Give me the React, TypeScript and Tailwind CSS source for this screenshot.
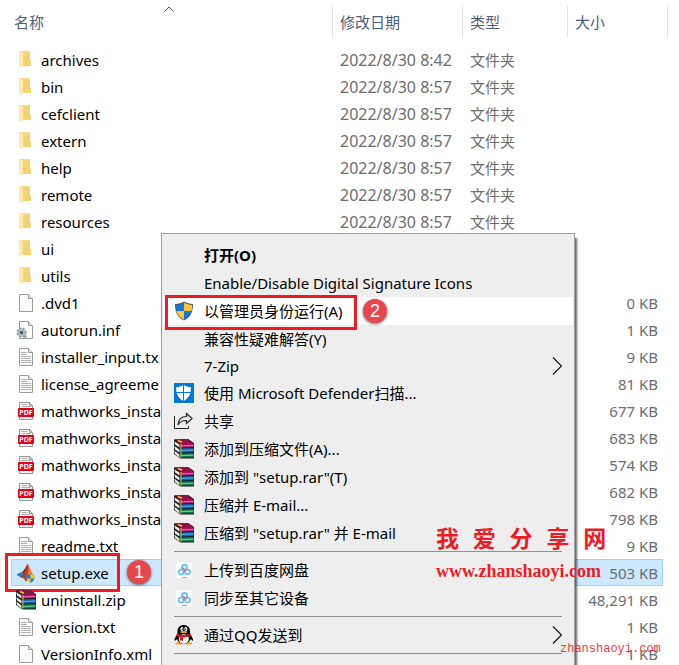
import { ReactNode } from "react";
import clsx from "clsx";

type IconName = "folder" | "file" | "text" | "inf" | "pdf" | "matlab" | "rar";

interface FileEntry {
  name: string;
  icon: IconName;
  date?: string;
  type?: string;
  size?: string;
}

const FILES: FileEntry[] = [
  { name: "archives", icon: "folder", date: "2022/8/30 8:42", type: "文件夹" },
  { name: "bin", icon: "folder", date: "2022/8/30 8:57", type: "文件夹" },
  { name: "cefclient", icon: "folder", date: "2022/8/30 8:57", type: "文件夹" },
  { name: "extern", icon: "folder", date: "2022/8/30 8:57", type: "文件夹" },
  { name: "help", icon: "folder", date: "2022/8/30 8:57", type: "文件夹" },
  { name: "remote", icon: "folder", date: "2022/8/30 8:57", type: "文件夹" },
  { name: "resources", icon: "folder", date: "2022/8/30 8:57", type: "文件夹" },
  { name: "ui", icon: "folder" },
  { name: "utils", icon: "folder" },
  { name: ".dvd1", icon: "file", size: "0 KB" },
  { name: "autorun.inf", icon: "inf", size: "1 KB" },
  { name: "installer_input.tx", icon: "text", size: "9 KB" },
  { name: "license_agreeme", icon: "text", size: "81 KB" },
  { name: "mathworks_insta", icon: "pdf", size: "677 KB" },
  { name: "mathworks_insta", icon: "pdf", size: "683 KB" },
  { name: "mathworks_insta", icon: "pdf", size: "574 KB" },
  { name: "mathworks_insta", icon: "pdf", size: "682 KB" },
  { name: "mathworks_insta", icon: "pdf", size: "798 KB" },
  { name: "readme.txt", icon: "text", size: "9 KB" },
  { name: "setup.exe", icon: "matlab", size: "503 KB" },
  { name: "uninstall.zip", icon: "rar", size: "48,291 KB" },
  { name: "version.txt", icon: "text", size: "1 KB" },
  { name: "VersionInfo.xml", icon: "file", size: "1 KB" },
];

function Page({ lines }: { lines?: boolean }) {
  return (
    <>
      <path d="M3.5 1.5h9l4 4v13h-13z" fill="#fafafa" stroke="#9c9c9c" />
      <path d="M12.5 1.5v4h4" fill="#e6e6e6" stroke="#9c9c9c" />
      {lines && (
        <path d="M5 5.5h6M5 7.5h6M5 9.5h10M5 11.5h10M5 13.5h10M5 15.5h10" stroke="#b0b0b0" />
      )}
    </>
  );
}

function RarIcon() {
  return (
    <svg viewBox="0 0 20 20" className="size-5 flex-none" aria-hidden="true">
      <path d="M0 .5 14 0l6 4v15.500H6.500L0 15z" fill="#1b1b22" />
      {/* pages on the left side */}
      <path d="M.3 2.300 5.500 5.500v3L1 5.500zM.3 7 5.500 10.500v3L1 10.500zM.3 11.500 5.500 15.500v3L1 15z" fill="#e4e6e8" />
      <path d="M0 .5 14 0l5.500 3.800L6 4.500z" fill="#8e1247" />
      <path d="M6 4.500 19.500 4v4L6 8.500z" fill="#a8165f" />
      <path d="M7 7 19.500 6.500" stroke="#e67ab8" strokeWidth="1.200" />
      <path d="M6 9.500 19.500 9v4L6 13.500z" fill="#1560a8" />
      <path d="M7 11.500 19.500 11" stroke="#52b0ee" strokeWidth="1.200" />
      <path d="M6 14.500 19.500 14v4.500H6z" fill="#127444" />
      <path d="M7 16.700 19.500 16.200" stroke="#62cf95" strokeWidth="1.200" />
      <path d="M7 5v13.500" stroke="#d8c021" />
      <path d="m4 1.500 4 1.700" stroke="#e4d02a" strokeWidth="1.500" />
    </svg>
  );
}

function FileIcon({ name }: { name: IconName }) {
  if (name === "rar") return <RarIcon />;
  return (
    <svg viewBox="0 0 20 20" className="size-5 flex-none" aria-hidden="true">
      {name === "folder" && (
        <>
          <path d="M3 1h11v9.500l1 .5v5H5z" fill="#f5d272" />
          <path d="M3 1h11v1.500H5z" fill="#f9dc8b" />
          <path d="M3 1l4 2v13l-1.500 2L3 16.500z" fill="#fdeaae" />
        </>
      )}
      {name === "file" && <Page />}
      {name === "text" && <Page lines />}
      {name === "inf" && (
        <>
          <Page />
          <circle cx="5.500" cy="12.500" r="4.300" fill="#b4bec6" stroke="#8f9aa3" strokeWidth="1.500" strokeDasharray="2 1.500" />
          <circle cx="5.500" cy="12.500" r="1.700" fill="#4d5a66" />
          <circle cx="9" cy="16.500" r="1.700" fill="#9eaab4" />
        </>
      )}
      {name === "pdf" && (
        <>
          <path d="M3.500 1.500h10l3 3v14h-13z" fill="#f4f4f4" stroke="#949494" />
          <path d="M13.500 1.500v3h3" fill="none" stroke="#949494" />
          <path d="M5.500 3.500h6M5.500 5.500h9" stroke="#b0b0b0" />
          <rect x="2" y="7" width="16" height="9" rx="1" fill="#e2001a" />
          <text x="10" y="14" fill="#fff" fontSize="7" fontWeight="700" textAnchor="middle" fontFamily="Open Sans, sans-serif">
            PDF
          </text>
        </>
      )}
      {name === "matlab" && (
        <>
          <path d="M.5 11.500 6 9l2.500 3-3 3z" fill="#2a78b8" />
          <path d="M6 9c2.500-1 3.500-6 6-8L8.500 12z" fill="#46304e" />
          <path d="M12 1c-2.500 2-2.500 8-6.500 14 2-.5 3 .5 4 3.500 3-1 3-5 5.500-6z" fill="#c23b1b" />
          <path d="M12 1c2 3 4 10 7 14l-4.500-3.500C13 12 12.500 15 11 17c1-5 2-11 1-16z" fill="#f08424" />
          <path d="M10 12.500 14.500 11l4.500 1.500c0 3.500-1.500 6-4.500 7.500-3-1.500-4.500-4-4.500-7.500z" fill="#2f7fce" />
          <path d="M14.500 11l4.500 1.500c0 1 0 2-.5 3h-4zM14.500 15.500V20c-2-1-3.500-2.500-4-4.500z" fill="#f8c52d" />
        </>
      )}
    </svg>
  );
}

function UacShield() {
  return (
    <svg viewBox="0 0 20 20" className="size-5" aria-hidden="true">
      <path d="M10 .5c2.500 1.500 5.500 2.300 9 2.500 0 8-2.500 13.500-9 16.500C3.500 16.500 1 11 1 3c3.500-.2 6.500-1 9-2.500z" fill="#50565c" />
      <path d="M10 1.700V10H2.400C2 8 1.900 6 2 4c3-.3 5.700-1 8-2.300z" fill="#1976d2" />
      <path d="M10 1.700V10h7.600c.4-2 .5-4 .4-6-3-.3-5.700-1-8-2.300z" fill="#fcc638" />
      <path d="M10 18.400V10H2.400c1 3.800 3.500 6.700 7.600 8.400z" fill="#fcc638" />
      <path d="M10 18.400V10h7.600c-1 3.800-3.500 6.700-7.600 8.400z" fill="#1976d2" />
    </svg>
  );
}

function DefenderIcon() {
  return (
    <svg viewBox="0 0 20 20" className="size-5" aria-hidden="true">
      <path d="M0 0h20v20H0z" fill="#0078d7" />
      <path d="M9.500 2c2 1.300 4.500 2 7.500 2.200 0 7-2.500 11-7.500 14C4.500 15.200 2 11.200 2 4.200 5 4 7.500 3.300 9.500 2z" fill="#fff" />
      <path d="M9.500 2v16.500M2 9.500h16" stroke="#0078d7" />
    </svg>
  );
}

function ShareIcon() {
  return (
    <svg viewBox="0 0 20 20" className="size-5" fill="none" stroke="#222" aria-hidden="true">
      <path d="M.5 5v12.500h14V15" />
      <path d="M12.500 2.500 18 7.500l-5.500 5v-3C8.500 9.500 6 10.500 4 14c.3-5.500 3.500-8.500 8.500-8.500z" strokeWidth="1.200" />
    </svg>
  );
}

function BaiduIcon() {
  return (
    <svg viewBox="0 0 20 20" className="size-5" fill="none" aria-hidden="true">
      <rect x="2" y="2" width="16" height="16" rx="3" fill="#fdfdfd" />
      <circle cx="10.500" cy="7.500" r="2.600" stroke="#55c3f8" strokeWidth="1.600" />
      <circle cx="7.200" cy="12" r="2.500" stroke="#55c3f8" strokeWidth="1.600" />
      <circle cx="13.500" cy="12" r="2.500" stroke="#55c3f8" strokeWidth="1.600" />
      <path d="m8.500 7.500 4 3.500M12 9.500 9 12" stroke="#f0667c" strokeWidth="1.300" />
      <path d="M8 17.500h5" stroke="#f08c99" />
    </svg>
  );
}

function QQIcon() {
  return (
    <svg viewBox="0 0 20 20" className="size-5" aria-hidden="true">
      <path d="M1 18.500c2-2 6-2 8.500 0-1 1.500-7 1.500-8.500 0zM10.500 18.500c2-2 6-2 8 0-1 1.500-7 1.500-8 0z" fill="#f5a31a" />
      <path d="M3.500 8 .5 14v2l3-2zM16 8l3 6v2l-3-2z" fill="#0b0b0b" />
      <ellipse cx="9.800" cy="12.500" rx="7" ry="6.500" fill="#0b0b0b" />
      <path d="M3.500 9V6c0-8 12.500-8 12.500 0v3z" fill="#0b0b0b" />
      <ellipse cx="9.800" cy="14" rx="5" ry="4.800" fill="#fff" />
      <ellipse cx="7.900" cy="4" rx="1.500" ry="2" fill="#fff" />
      <ellipse cx="11.800" cy="4" rx="1.500" ry="2" fill="#fff" />
      <circle cx="8.300" cy="4.200" r=".7" fill="#0b0b0b" />
      <circle cx="11.400" cy="4.200" r=".7" fill="#0b0b0b" />
      <ellipse cx="9.800" cy="7" rx="3.500" ry="1.100" fill="#f5a31a" />
      <path d="M3 8.500c4 2 9.500 2 13.500 0l.5 2.300c-3 1-5.500 1.500-8 1.500v3.500L6 15.500v-3.600l-3.500-1z" fill="#e3131c" />
    </svg>
  );
}

interface MenuEntry {
  label: string;
  icon?: ReactNode;
  bold?: boolean;
  active?: boolean;
  submenu?: boolean;
  compact?: boolean;
}

const MENU: MenuEntry[][] = [
  [
    { label: "打开(O)", bold: true },
    { label: "Enable/Disable Digital Signature Icons" },
    { label: "以管理员身份运行(A)", icon: <UacShield />, active: true },
    { label: "兼容性疑难解答(Y)" },
    { label: "7-Zip", submenu: true, compact: true },
    { label: "使用 Microsoft Defender扫描...", icon: <DefenderIcon /> },
    { label: "共享", icon: <ShareIcon /> },
    { label: "添加到压缩文件(A)...", icon: <RarIcon /> },
    { label: '添加到 "setup.rar"(T)', icon: <RarIcon /> },
    { label: "压缩并 E-mail...", icon: <RarIcon /> },
    { label: '压缩到 "setup.rar" 并 E-mail', icon: <RarIcon /> },
  ],
  [
    { label: "上传到百度网盘", icon: <BaiduIcon /> },
    { label: "同步至其它设备", icon: <BaiduIcon /> },
  ],
  [{ label: "通过QQ发送到", icon: <QQIcon />, submenu: true }],
];

function Badge({ n, className }: { n: number; className: string }) {
  return (
    <span
      className={clsx(
        "absolute flex size-6 items-center justify-center rounded-full bg-[#e8474c] font-['Liberation_Sans',sans-serif] text-lg leading-6 text-white shadow-[0_1px_3px_rgba(0,0,0,0.6)]",
        className,
      )}
    >
      {n}
    </span>
  );
}

function HeaderCell({ label, className, last }: { label: string; className: string; last?: boolean }) {
  return (
    <th scope="col" className={clsx("p-0 text-left align-top font-normal", className)}>
      <div className={clsx("mt-1.5 flex h-8 items-center border-r border-[#e2e2e2]", last && "-mr-[5px]")}>
        <button type="button" className="text-[#4c607a]">{label}</button>
      </div>
    </th>
  );
}

function FileTable() {
  return (
    <table className="w-full table-fixed border-collapse">
      <thead>
        <tr className="h-[46px]">
          <th scope="col" className="relative p-0 pl-[3px] text-left align-top font-normal" aria-sort="ascending">
            <div className="mt-1.5 flex h-8 items-center border-r border-[#e2e2e2]">
              <button type="button" className="text-[#4c607a]">名称</button>
            </div>
            <svg viewBox="0 0 10 6" className="absolute top-1.5 left-[153px] h-1.5 w-2.5" fill="none" stroke="#555" aria-hidden="true">
              <path d="M.5 5.500 5 1l4.500 4.500" />
            </svg>
          </th>
          <HeaderCell label="修改日期" className="w-[130px] pl-[7px]" />
          <HeaderCell label="类型" className="w-[105px] pl-[7px]" />
          <HeaderCell label="大小" className="w-[95px] pl-[7px]" last />
        </tr>
      </thead>
      <tbody>
        {FILES.map((f, i) => {
          const selected = f.name === "setup.exe";
          return (
            <tr
              key={i}
              className={clsx("h-[27px]", selected && "bg-[#cce8ff] outline -outline-offset-1 outline-[#99d1ff]")}
            >
              <td className="relative p-0 pl-[5px]">
                <div className="flex items-center gap-[5px]">
                  <FileIcon name={f.icon} />
                  <span className="text-black">{f.name}</span>
                </div>
                {selected && (
                  <>
                    <span className="absolute -top-1.5 -left-1.5 h-[39px] w-[115px] border-3 border-[#ed1c24]" />
                    <Badge n={1} className="top-px left-[116px]" />
                  </>
                )}
              </td>
              <td className="p-0 pl-[7px] text-base leading-5">{f.date}</td>
              <td className="p-0 pl-[7px]">{f.type}</td>
              <td className="p-0 pr-[5px] text-right">{f.size}</td>
            </tr>
          );
        })}
      </tbody>
    </table>
  );
}

function MenuItem({ item }: { item: MenuEntry }) {
  return (
    <button
      type="button"
      role="menuitem"
      className={clsx(
        "relative flex w-full items-center gap-2.5 pr-[11px] pl-[11px] text-left",
        item.compact ? "h-[26px]" : "h-7",
        item.bold && "font-bold",
        item.active && "bg-white",
      )}
    >
      <span className="size-5 flex-none">{item.icon}</span>
      <span className="flex-1 whitespace-nowrap">{item.label}</span>
      {item.submenu && (
        <svg viewBox="0 0 10 18" className="h-[18px] w-2.5" fill="none" stroke="#111" strokeWidth="1.200" aria-hidden="true">
          <path d="m1 .5 8.500 8.500L1 17.500" />
        </svg>
      )}
      {item.active && (
        <>
          <span className="absolute -top-0.5 left-0.5 h-[35px] w-48 border-3 border-[#ed1c24]" />
          <Badge n={2} className="top-0.5 left-[200px]" />
        </>
      )}
    </button>
  );
}

function ContextMenu() {
  return (
    <div
      role="menu"
      className="absolute top-[233px] -bottom-2 left-[161px] w-[414px] border border-[#a0a0a0] bg-[#eeeeee] px-px pt-[7px] text-black shadow-[2px_5px_2px_0_rgba(0,0,0,0.6)]"
    >
      {MENU.map((group, i) => (
        <div key={i} role="group">
          {group.map((item) => (
            <MenuItem key={item.label} item={item} />
          ))}
          <hr className="mx-[11px] my-1 border-[#919191]" />
        </div>
      ))}
    </div>
  );
}

export default function App() {
  return (
    <main className="relative h-screen overflow-hidden bg-white pr-4 pl-[11px] font-['Noto_Sans','Noto_Sans_CJK_SC',sans-serif] text-[15px] leading-5 text-[#6d6d6d]">
      <FileTable />
      <ContextMenu />
      <div className="absolute top-[526px] left-[436px] font-bold whitespace-nowrap text-[#ed1c24]">
        <p className="font-['Liberation_Mono','Noto_Sans_CJK_SC',monospace] text-[23px] leading-[30px]">我 爱 分 享 网</p>
        <p className="font-['Liberation_Serif',serif] text-lg leading-[30px]">www.zhanshaoyi.com</p>
      </div>
      <p className="absolute top-[639px] left-[560px] font-['Liberation_Mono',monospace] text-xs leading-5 text-[#ee3a3f]">
        zhanshaoyi.com
      </p>
    </main>
  );
}
